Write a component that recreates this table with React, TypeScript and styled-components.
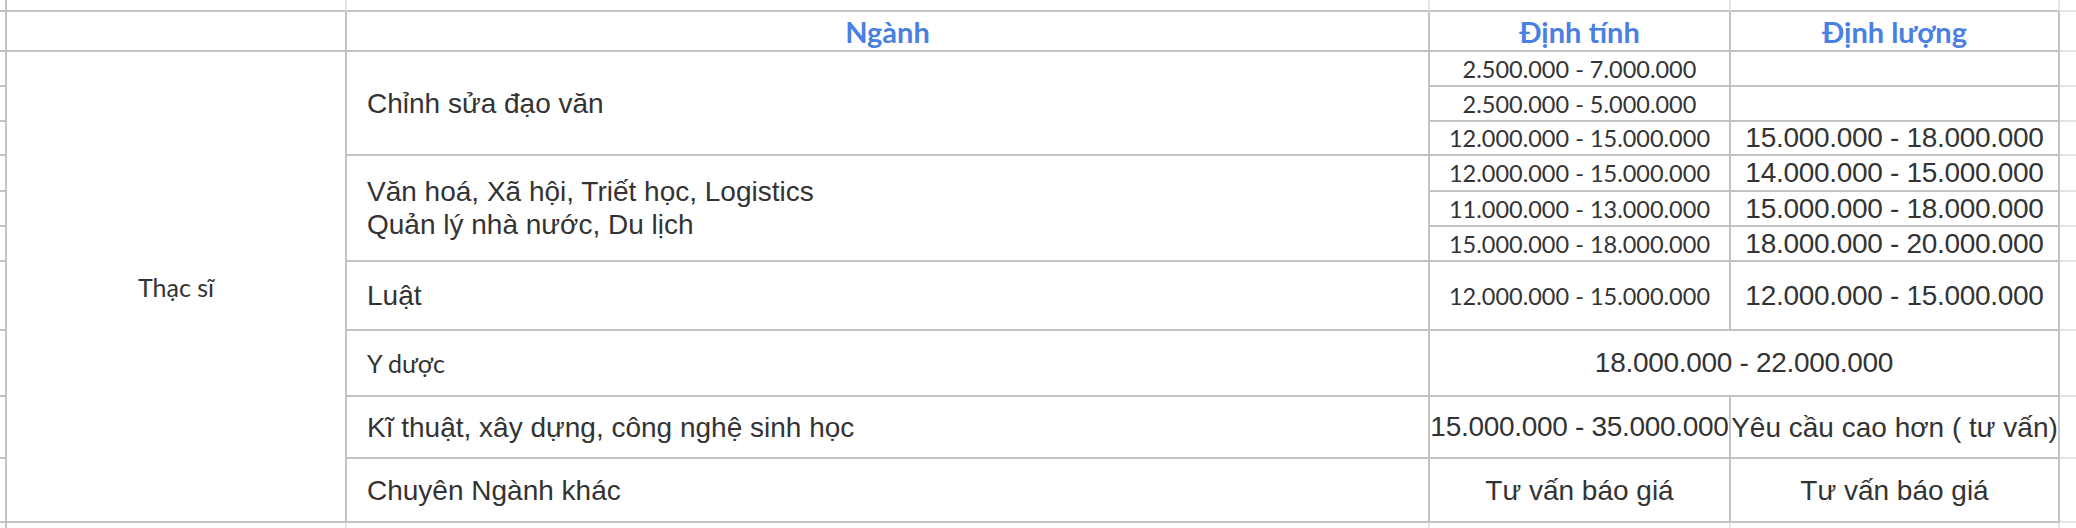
import styled, { createGlobalStyle } from "styled-components";

const GlobalStyle = createGlobalStyle`
  html, body {
    margin: 0;
    padding: 0;
    background: #ffffff;
  }
  body {
    font-family: "Liberation Sans", Arial, sans-serif;
  }
`;

const LINE = "#c3c3c3";
const FAINT = "#e4e4e4";

type Edge = "line" | "faint" | "none";

const edgeColor = (e: Edge = "line") =>
  e === "none" ? "0 solid transparent" : `2px solid ${e === "faint" ? FAINT : LINE}`;

const Sheet = styled.div`
  display: grid;
  grid-template-columns: 7px 340px 1083px 301px 329px 1fr;
  grid-template-rows: 12px 40px 35px 35px 34px 36px 35px 35px 69px 66px 62px 64px 1fr;
  width: 2076px;
  height: 528px;
  overflow: hidden;
  background: #ffffff;
  color: #333333;
`;

const Cell = styled.div<{
  $row: number;
  $col: number;
  $rows?: number;
  $cols?: number;
  $left?: boolean;
  $right?: Edge;
  $bottom?: Edge;
}>`
  grid-row: ${(p) => p.$row + 1} / span ${(p) => p.$rows ?? 1};
  grid-column: ${(p) => p.$col + 1} / span ${(p) => p.$cols ?? 1};
  box-sizing: border-box;
  min-width: 0;
  display: flex;
  flex-direction: column;
  justify-content: center;
  align-items: ${(p) => (p.$left ? "flex-start" : "center")};
  padding-left: ${(p) => (p.$left ? "20px" : "0")};
  border-right: ${(p) => edgeColor(p.$right)};
  border-bottom: ${(p) => edgeColor(p.$bottom)};
  white-space: nowrap;
`;

// blue bold column titles
const Heading = styled.span`
  font-family: Lato, "Noto Sans", sans-serif;
  font-weight: 700;
  font-size: 29px;
  color: #4a7fe3;
`;

const Label = styled.span`
  font-size: 28px;
  line-height: 33px;
`;

const Price = styled.span`
  font-size: 28px;
  letter-spacing: -0.3px;
`;

// calibri-ish text (no calibri here, lato is the closest)
const Soft = styled.span<{ $size?: number }>`
  font-family: Lato, "Noto Sans", sans-serif;
  font-size: ${(p) => p.$size ?? 23.5}px;
`;

const ROWS = 13;

const App = () => {
  return (
    <>
      <GlobalStyle />
      <Sheet>
        {/* spreadsheet edges around the table */}
        {Array.from({ length: ROWS }).map((_, r) => (
          <Cell key={`l${r}`} $row={r} $col={0} $bottom={r === ROWS - 1 ? "none" : "line"} />
        ))}
        {Array.from({ length: ROWS }).map((_, r) => (
          <Cell key={`r${r}`} $row={r} $col={5} $right="none" $bottom={r === ROWS - 1 ? "none" : "faint"} />
        ))}
        {[1, 2, 3, 4].map((c) => (
          <Cell key={`t${c}`} $row={0} $col={c} $right="faint" />
        ))}
        {[1, 2, 3, 4].map((c) => (
          <Cell key={`b${c}`} $row={12} $col={c} $right="faint" $bottom="none" />
        ))}

        {/* header */}
        <Cell $row={1} $col={1} />
        <Cell $row={1} $col={2}>
          <Heading>Ngành</Heading>
        </Cell>
        <Cell $row={1} $col={3}>
          <Heading>Định tính</Heading>
        </Cell>
        <Cell $row={1} $col={4}>
          <Heading>Định lượng</Heading>
        </Cell>

        <Cell $row={2} $col={1} $rows={10}>
          <Soft $size={25}>Thạc sĩ</Soft>
        </Cell>

        {/* Chỉnh sửa đạo văn */}
        <Cell $row={2} $col={2} $rows={3} $left>
          <Label>Chỉnh sửa đạo văn</Label>
        </Cell>
        <Cell $row={2} $col={3}>
          <Soft>2.500.000 - 7.000.000</Soft>
        </Cell>
        <Cell $row={2} $col={4} />
        <Cell $row={3} $col={3}>
          <Soft>2.500.000 - 5.000.000</Soft>
        </Cell>
        <Cell $row={3} $col={4} />
        <Cell $row={4} $col={3}>
          <Soft>12.000.000 - 15.000.000</Soft>
        </Cell>
        <Cell $row={4} $col={4}>
          <Price>15.000.000 - 18.000.000</Price>
        </Cell>

        {/* Văn hoá ... */}
        <Cell $row={5} $col={2} $rows={3} $left>
          <Label>
            Văn hoá, Xã hội, Triết học, Logistics
            <br />
            Quản lý nhà nước, Du lịch
          </Label>
        </Cell>
        <Cell $row={5} $col={3}>
          <Soft>12.000.000 - 15.000.000</Soft>
        </Cell>
        <Cell $row={5} $col={4}>
          <Price>14.000.000 - 15.000.000</Price>
        </Cell>
        <Cell $row={6} $col={3}>
          <Soft>11.000.000 - 13.000.000</Soft>
        </Cell>
        <Cell $row={6} $col={4}>
          <Price>15.000.000 - 18.000.000</Price>
        </Cell>
        <Cell $row={7} $col={3}>
          <Soft>15.000.000 - 18.000.000</Soft>
        </Cell>
        <Cell $row={7} $col={4}>
          <Price>18.000.000 - 20.000.000</Price>
        </Cell>

        {/* Luật */}
        <Cell $row={8} $col={2} $left>
          <Label>Luật</Label>
        </Cell>
        <Cell $row={8} $col={3}>
          <Soft>12.000.000 - 15.000.000</Soft>
        </Cell>
        <Cell $row={8} $col={4}>
          <Price>12.000.000 - 15.000.000</Price>
        </Cell>

        {/* Y dược */}
        <Cell $row={9} $col={2} $left>
          <Soft $size={25}>Y dược</Soft>
        </Cell>
        <Cell $row={9} $col={3} $cols={2}>
          <Price>18.000.000 - 22.000.000</Price>
        </Cell>

        {/* Kĩ thuật */}
        <Cell $row={10} $col={2} $left>
          <Label>Kĩ thuật, xây dựng, công nghệ sinh học</Label>
        </Cell>
        <Cell $row={10} $col={3}>
          <Price>15.000.000 - 35.000.000</Price>
        </Cell>
        <Cell $row={10} $col={4}>
          <Label>Yêu cầu cao hơn ( tư vấn)</Label>
        </Cell>

        {/* Chuyên Ngành khác */}
        <Cell $row={11} $col={2} $left>
          <Label>Chuyên Ngành khác</Label>
        </Cell>
        <Cell $row={11} $col={3}>
          <Label>Tư vấn báo giá</Label>
        </Cell>
        <Cell $row={11} $col={4}>
          <Label>Tư vấn báo giá</Label>
        </Cell>
      </Sheet>
    </>
  );
};

export default App;
